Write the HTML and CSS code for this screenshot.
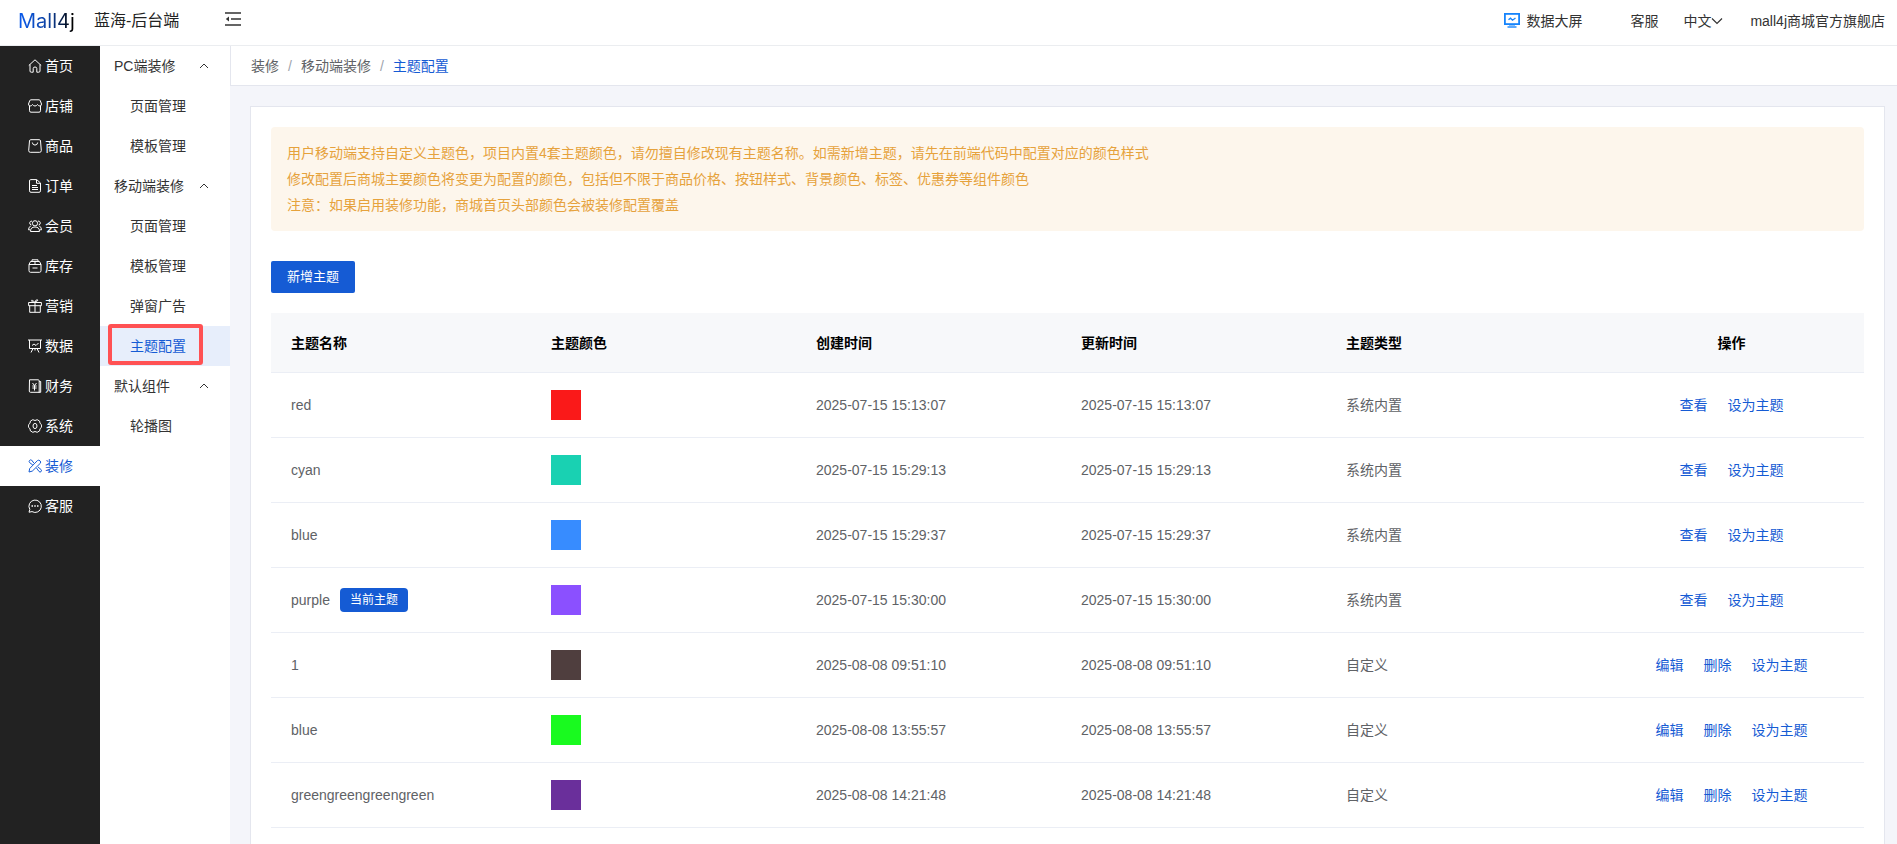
FILE: index.html
```html
<!DOCTYPE html>
<html lang="zh-CN">
<head>
<meta charset="utf-8">
<title>主题配置</title>
<link rel="stylesheet" href="styles.css">
</head>
<body>
<header class="topbar">
  <a class="logo" href="#">Mall4j</a>
  <span class="site-name">蓝海-后台端</span>
  <button class="fold" type="button" aria-label="收起菜单">
    <svg width="16" height="14" viewBox="0 0 16 14" fill="none" stroke="#333" stroke-width="1.5"><path d="M0 1h16M6 7h10M0 13h16"/><path d="M4 4.5v5L.8 7z" fill="#333" stroke="none"/></svg>
  </button>
  <nav class="tools">
    <a class="tool screen" href="#">
      <svg width="16" height="15" viewBox="0 0 16 15" fill="none" stroke="#1684fc"><rect x=".9" y=".9" width="14.2" height="10.2" stroke-width="1.8"/><path d="M4.5 6.8l2-1.6 2 2L11.500 5" stroke-width="1.4"/><path d="M5 12.500h6" stroke="#8ac1fb"/><path d="M3.500 14h9" stroke-width="1.400"/></svg>
      数据大屏
    </a>
    <a class="tool service" href="#">客服</a>
    <button class="tool lang" type="button">中文<svg width="12" height="8" viewBox="0 0 12 8" fill="none" stroke="#333" stroke-width="1.200"><path d="M1 1.500l5 5 5-5"/></svg></button>
    <a class="tool" href="#">mall4j商城官方旗舰店</a>
  </nav>
</header>
<div class="shell">
  <nav class="main-menu">
    <a href="#"><svg class="icon" viewBox="0 0 14 14"><path d="M.8 6.500L7 .8l6.200 5.700M2 5.500V12q0 1.200 1.200 1.200h2V9.500Q5.200 8 7 8t1.800 1.500v3.700h2q1.200 0 1.200-1.200V5.500"/></svg>首页</a>
    <a href="#"><svg class="icon" viewBox="0 0 14 14"><path d="M3 .8h8q1 0 1.300 1L13.500 5q0 2-1.600 2T9.500 5.500Q8.500 7 7 7T4.500 5.500Q3.700 7 2.100 7T.5 5l1.200-3.200Q2 .8 3 .8zM1.500 7v4.700q0 1.500 1.500 1.500h8q1.500 0 1.500-1.500V7"/></svg>店铺</a>
    <a href="#"><svg class="icon" viewBox="0 0 14 14"><path d="M2.800.7h8.400q1.200 0 1.300 1.200l.8 9.600q0 1.800-1.600 1.800H2.300Q.7 13.300.7 11.500l.8-9.600Q1.600.7 2.800.7zM4.300 3.500q.3 2.600 2.700 2.600t2.700-2.600"/></svg>商品</a>
    <a href="#"><svg class="icon" viewBox="0 0 14 14"><path d="M2.700.6h6L12.500 4v7.800q0 1.500-1.500 1.500H3q-1.500 0-1.500-1.500V2Q1.500.6 2.700.6zM8.500.8v3.500h4M4 6.500h5M4 8.500h6M4 10.500h6"/></svg>订单</a>
    <a href="#"><svg class="icon" viewBox="0 0 14 14"><circle cx="7" cy="4.300" r="2.600"/><path d="M2.500 12.500q0-4.500 4.500-4.500t4.500 4.500zM3.400 6Q1.500 5.500 1.700 3.800T4 2M2.800 7Q.6 7.800.5 10.800h1.700M10.600 6q1.900-.5 1.700-2.200T10 2M11.200 7q2.200.8 2.300 3.800h-1.700"/></svg>会员</a>
    <a href="#"><svg class="icon" viewBox="0 0 14 14"><path d="M4 3V.8h6V3M2.500 2.500h9L13 5.500v6q0 1.800-1.500 1.800h-9Q1 13.300 1 11.500v-6zM1 5.500h12M4.500 9h5M7 2.500v3"/></svg>库存</a>
    <a href="#"><svg class="icon" viewBox="0 0 14 14"><path d="M.6 3.500h12.800v3.200H.6zM1.700 6.700v6.600h10.600V6.700M7 3.500v9.800M7 3.500Q3.500 3.300 3.500 1.700T7 3.500Q7.500.5 9.300.8T7 3.500"/></svg>营销</a>
    <a href="#"><svg class="icon" viewBox="0 0 14 14"><path d="M0 1h14M1.500 1v8.500h11V1M4 6.500l2-1.500 2 1.500L10.500 4M5 9.500l-2 4M9 9.500l2 4M7 9.500v2"/></svg>数据</a>
    <a href="#"><svg class="icon" viewBox="0 0 14 14"><path d="M1.500.8h8.700q1 0 1 1v11.500H2.500q-1.200 0-1.200-1.200zM11.200 2.500h1.500v10.800h-2M4.500 4l2 2.500 2-2.500M4.300 7h4.400M4.300 9h4.400M6.500 6.500v5"/></svg>财务</a>
    <a href="#"><svg class="icon" viewBox="0 0 14 14"><path d="M4.800.7L7 1.500 9.200.7l2.400 1.400.4 2.200 1.600 1.500v2.400L12 9.700l-.4 2.200-2.400 1.400-2.200-.8-2.200.8-2.400-1.400L2 9.700.4 8.200V5.800L2 4.300l.4-2.200z"/><ellipse cx="7" cy="7" rx="2" ry="2.600"/></svg>系统</a>
    <a class="active" href="#"><svg class="icon" viewBox="0 0 14 14"><path d="M4.800 6L1.500 3.500q-.8-1 0-2t2-.5L6 4.200M8.500 9l2.500 3.500q1 1 2 .2t.2-2L10 8M1 13l.7-3.500 7.800-8q1.200-.8 2.500.3t.3 2.500l-8 7.800z"/></svg>装修</a>
    <a href="#"><svg class="icon" viewBox="0 0 14 14"><path d="M1 13.200l.8-2.800A6.200 6.200 0 1 1 4 12.600z"/><path d="M3.500 7H5M6.250 7h1.500M9 7h1.500" stroke-width="1.600"/></svg>客服</a>
  </nav>
  <nav class="sub-menu">
    <button class="group" type="button">PC端装修<svg class="caret" viewBox="0 0 10 6"><path d="M1 5l4-4 4 4"/></svg></button>
    <a href="#">页面管理</a>
    <a href="#">模板管理</a>
    <button class="group" type="button">移动端装修<svg class="caret" viewBox="0 0 10 6"><path d="M1 5l4-4 4 4"/></svg></button>
    <a href="#">页面管理</a>
    <a href="#">模板管理</a>
    <a href="#">弹窗广告</a>
    <a class="active" href="#">主题配置</a>
    <button class="group" type="button">默认组件<svg class="caret" viewBox="0 0 10 6"><path d="M1 5l4-4 4 4"/></svg></button>
    <a href="#">轮播图</a>
  </nav>
  <main class="content">
    <nav class="crumbs"><a href="#">装修</a><span class="sep">/</span><a href="#">移动端装修</a><span class="sep">/</span><a class="current" href="#">主题配置</a></nav>
    <section class="card">
      <div class="notice">
        <p>用户移动端支持自定义主题色，项目内置4套主题颜色，请勿擅自修改现有主题名称。如需新增主题，请先在前端代码中配置对应的颜色样式</p>
        <p>修改配置后商城主要颜色将变更为配置的颜色，包括但不限于商品价格、按钮样式、背景颜色、标签、优惠券等组件颜色</p>
        <p>注意：如果启用装修功能，商城首页头部颜色会被装修配置覆盖</p>
      </div>
      <button class="add" type="button">新增主题</button>
      <table class="themes">
        <colgroup><col class="c-name"><col class="c-std"><col class="c-std"><col class="c-std"><col class="c-type"><col class="c-std"></colgroup>
        <thead>
          <tr><th>主题名称</th><th>主题颜色</th><th>创建时间</th><th>更新时间</th><th>主题类型</th><th class="ops">操作</th></tr>
        </thead>
        <tbody>
          <tr><td>red</td><td><span class="swatch s-red"></span></td><td>2025-07-15 15:13:07</td><td>2025-07-15 15:13:07</td><td>系统内置</td><td><div class="actions"><a href="#">查看</a><a href="#">设为主题</a></div></td></tr>
          <tr><td>cyan</td><td><span class="swatch s-cyan"></span></td><td>2025-07-15 15:29:13</td><td>2025-07-15 15:29:13</td><td>系统内置</td><td><div class="actions"><a href="#">查看</a><a href="#">设为主题</a></div></td></tr>
          <tr><td>blue</td><td><span class="swatch s-blue"></span></td><td>2025-07-15 15:29:37</td><td>2025-07-15 15:29:37</td><td>系统内置</td><td><div class="actions"><a href="#">查看</a><a href="#">设为主题</a></div></td></tr>
          <tr><td><div class="named">purple<span class="tag">当前主题</span></div></td><td><span class="swatch s-purple"></span></td><td>2025-07-15 15:30:00</td><td>2025-07-15 15:30:00</td><td>系统内置</td><td><div class="actions"><a href="#">查看</a><a href="#">设为主题</a></div></td></tr>
          <tr><td>1</td><td><span class="swatch s-brown"></span></td><td>2025-08-08 09:51:10</td><td>2025-08-08 09:51:10</td><td>自定义</td><td><div class="actions"><a href="#">编辑</a><a href="#">删除</a><a href="#">设为主题</a></div></td></tr>
          <tr><td>blue</td><td><span class="swatch s-green"></span></td><td>2025-08-08 13:55:57</td><td>2025-08-08 13:55:57</td><td>自定义</td><td><div class="actions"><a href="#">编辑</a><a href="#">删除</a><a href="#">设为主题</a></div></td></tr>
          <tr><td>greengreengreengreen</td><td><span class="swatch s-violet"></span></td><td>2025-08-08 14:21:48</td><td>2025-08-08 14:21:48</td><td>自定义</td><td><div class="actions"><a href="#">编辑</a><a href="#">删除</a><a href="#">设为主题</a></div></td></tr>
        </tbody>
      </table>
    </section>
  </main>
</div>
</body>
</html>
```
FILE: styles.css
```css
*, *::after { box-sizing: border-box; }
body {
  margin: 0;
  min-height: 100vh;
  display: flex;
  flex-direction: column;
  font: 14px/20px "Liberation Sans", "Noto Sans CJK SC", sans-serif;
  color: #333;
  background: #f4f5fa;
}
a { color: inherit; text-decoration: none; }
button { font: inherit; color: inherit; background: none; border: 0; padding: 0; cursor: pointer; }
p { margin: 0; }

.topbar {
  height: 46px;
  display: flex;
  align-items: center;
  padding: 0 12px 4px 18px;
  background: #fff;
  border-bottom: 1px solid #ebedf0;
}
.logo {
  width: 64px;
  font: 20px/24px Inter, sans-serif;
  color: transparent;
  background: linear-gradient(90deg, #0a5cf0, #0d3f9a 50%, #000 85%);
  background-clip: text;
}
.site-name { margin-left: 12px; font-size: 16px; color: #222; }
.fold { display: flex; margin-left: 46px; padding-bottom: 4px; }
.tools { margin-left: auto; display: flex; align-items: center; }
.tool { display: flex; align-items: center; white-space: nowrap; }
.screen { gap: 6px; margin-right: 48px; }
.service { margin-right: 25px; }
.lang { margin-right: 27px; }

.shell { flex: 1; display: flex; }
.main-menu { flex: none; width: 100px; background: #222; color: #fff; }
.main-menu a { height: 40px; display: flex; align-items: center; gap: 3px; padding-left: 28px; }
.main-menu .active { background: #fff; color: #155bd4; }
.icon { width: 14px; height: 14px; fill: none; stroke: currentColor; stroke-width: 1; }

.sub-menu { flex: none; width: 130px; background: #fff; }
.sub-menu a { position: relative; height: 40px; display: flex; align-items: center; padding-left: 30px; }
.sub-menu .active { background: #e7eefb; color: #155bd4; }
.sub-menu .active::after {
  content: "";
  position: absolute;
  left: 8px;
  top: -2px;
  width: 95px;
  height: 41px;
  border: 4px solid #ff5153;
  border-radius: 3px;
}
.group { width: 100%; height: 40px; display: flex; align-items: center; justify-content: space-between; padding: 0 21px 0 14px; }
.caret { width: 10px; height: 6px; fill: none; stroke: #333; }

.content { flex: 1; min-width: 0; display: flex; flex-direction: column; }
.crumbs {
  height: 40px;
  display: flex;
  align-items: center;
  padding-left: 20px;
  background: #fff;
  border-left: 1px solid #e4e6ee;
  border-bottom: 1px solid #e4e6ee;
  color: #606266;
}
.sep { margin: 0 9px; color: #a0a4ac; }
.current { color: #155bd4; }

.card {
  flex: 1;
  margin: 20px 12px 0 20px;
  padding: 20px;
  background: #fff;
  border: 1px solid #e4e6ee;
  border-bottom: 0;
}
.notice { padding: 13px 16px; border-radius: 4px; background: #fdf6ec; color: #e6a23c; line-height: 26px; }
.add { display: block; height: 32px; margin: 30px 0 20px; padding: 0 16px; border-radius: 2px; background: #155bd4; color: #fff; font-size: 13px; }

.themes { width: 100%; table-layout: fixed; border-collapse: separate; border-spacing: 0; color: #606266; }
.c-name { width: 260px; }
.c-std { width: 265px; }
.c-type { width: 273px; }
.themes th, .themes td { padding: 0 20px; text-align: left; border-bottom: 1px solid #ebeef5; }
.themes th { height: 60px; background: #f7f8fa; color: #000; font-weight: 700; }
.themes td { height: 65px; }
.themes .ops { text-align: center; }
.actions { display: flex; justify-content: center; gap: 20px; color: #155bd4; }
.named { display: flex; align-items: center; gap: 10px; }
.tag { padding: 0 10px; border-radius: 4px; background: #155bd4; color: #fff; font-size: 12px; line-height: 24px; }
.swatch { display: block; width: 30px; height: 30px; }
.s-red { background: #fa1919; }
.s-cyan { background: #19d1b2; }
.s-blue { background: #378cff; }
.s-purple { background: #8b50ff; }
.s-brown { background: #4f3e3e; }
.s-green { background: #19fa1f; }
.s-violet { background: #6a2f9b; }
```
